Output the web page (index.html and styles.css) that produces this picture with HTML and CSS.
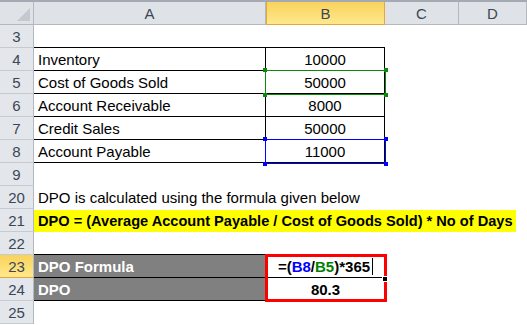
FILE: index.html
```html
<!DOCTYPE html>
<html>
  <head>
    <title>DPO Formula</title>
    <link rel="stylesheet" href="styles.css">
  </head>
  <body>
    <div class="sheet">
      <div class="topbar"></div>

      <!-- column headers -->
      <div class="row colheads">
        <div class="corner"><span class="corner-tri"></span></div>
        <div class="ch">A</div>
        <div class="ch active">B</div>
        <div class="ch">C</div>
        <div class="ch">D</div>
      </div>

      <div class="row">
        <div class="rh">3</div>
        <div class="cell a bottom"></div>
        <div class="cell b bottom"></div>
        <div class="cell"></div>
        <div class="cell"></div>
      </div>
      <div class="row">
        <div class="rh">4</div>
        <div class="cell a tb">Inventory</div>
        <div class="cell b tb tr num">10000</div>
        <div class="cell"></div>
        <div class="cell"></div>
      </div>
      <div class="row">
        <div class="rh">5</div>
        <div class="cell a tb">Cost of Goods Sold</div>
        <div class="cell b tb tr num">50000</div>
        <div class="cell"></div>
        <div class="cell"></div>
      </div>
      <div class="row">
        <div class="rh">6</div>
        <div class="cell a tb">Account Receivable</div>
        <div class="cell b tb tr num">8000</div>
        <div class="cell"></div>
        <div class="cell"></div>
      </div>
      <div class="row">
        <div class="rh">7</div>
        <div class="cell a tb">Credit Sales</div>
        <div class="cell b tb tr num">50000</div>
        <div class="cell"></div>
        <div class="cell"></div>
      </div>
      <div class="row">
        <div class="rh">8</div>
        <div class="cell a tb">Account Payable</div>
        <div class="cell b tb tr num">11000</div>
        <div class="cell"></div>
        <div class="cell"></div>
      </div>
      <div class="row">
        <div class="rh">9</div>
        <div class="cell a"></div>
        <div class="cell b"></div>
        <div class="cell"></div>
        <div class="cell"></div>
      </div>
      <div class="row">
        <div class="rh">20</div>
        <div class="cell wide">DPO is calculated using the formula given below</div>
      </div>
      <div class="row">
        <div class="rh">21</div>
        <div class="cell wide"><span class="highlight">DPO = (Average Account Payable / Cost of Goods Sold) * No of Days</span></div>
      </div>
      <div class="row">
        <div class="rh">22</div>
        <div class="cell a bottom"></div>
        <div class="cell b"></div>
        <div class="cell"></div>
        <div class="cell"></div>
      </div>
      <div class="row">
        <div class="rh active">23</div>
        <div class="cell a tb dark">DPO Formula</div>
        <div class="cell b tb num bold">=(<span class="ref-blue">B8</span>/<span class="ref-green">B5</span>)*365<span class="caret"></span></div>
        <div class="cell"></div>
        <div class="cell"></div>
      </div>
      <div class="row">
        <div class="rh">24</div>
        <div class="cell a tb dark">DPO</div>
        <div class="cell b num bold">80.3</div>
        <div class="cell"></div>
        <div class="cell"></div>
      </div>
      <div class="row">
        <div class="rh">25</div>
        <div class="cell a"></div>
        <div class="cell b"></div>
        <div class="cell"></div>
        <div class="cell"></div>
      </div>

      <!-- selection overlays -->
      <div class="sel sel-green"><i class="h tl"></i><i class="h tr2"></i><i class="h bl"></i><i class="h br"></i></div>
      <div class="sel sel-blue"><i class="h tl"></i><i class="h tr2"></i><i class="h bl"></i><i class="h br"></i></div>
      <div class="sel sel-red"></div>
      <div class="fill-handle"></div>
    </div>
  </body>
</html>
```

FILE: styles.css
```css
body {
  margin: 0px;
  font-family: "Liberation Sans", Arial, sans-serif;
  font-size: 15px;
  color: #000;
  background: #fff;
}

.sheet {
  position: relative;
  width: 527px;
  height: 325px;
  overflow: hidden;
}

.topbar {
  height: 2px;
  background-color: #a3aab3;
}

.row {
  display: grid;
  grid-template-columns: 34px 232px 119px 74px 1fr;
  height: 23px;
}

/* headers */
.colheads {
  background-color: #dfe3e8;
  border-bottom: 1px solid #b3b9c1;
  height: 22px;
  color: #3b4656;
  font-size: 15px;
}

.corner {
  position: relative;
  border-right: 1px solid #b3b9c1;
}

.corner-tri {
  position: absolute;
  right: 3px;
  bottom: 3px;
  width: 0;
  height: 0;
  border-left: 13px solid transparent;
  border-bottom: 13px solid #c4c9cf;
}

.ch {
  display: flex;
  align-items: center;
  justify-content: center;
  border-right: 1px solid #b3b9c1;
}

.ch.active {
  background: linear-gradient(#f9d25c, #ffe98c);
  border: 1px solid #e2a93a;
  border-top: none;
  margin-bottom: -1px;
}

.rh {
  display: flex;
  align-items: center;
  justify-content: center;
  background-color: #e3e6eb;
  border-right: 1px solid #b3b9c1;
  border-bottom: 1px solid #c6cbd2;
  color: #3b4656;
  font-size: 15px;
}

.rh.active {
  background: linear-gradient(#f9d25c, #ffe98c);
  border-bottom: 1px solid #e2a93a;
}

/* cells */
.cell {
  display: flex;
  align-items: center;
  padding-left: 4px;
  white-space: nowrap;
  box-sizing: border-box;
}

.cell.tb,
.cell.bottom {
  border-bottom: 1px solid #000;
}

.cell.a.tb,
.cell.tr {
  border-right: 1px solid #000;
}

.cell.num {
  justify-content: center;
  padding-left: 0;
}

.cell.bold {
  font-weight: bold;
}

.cell.dark {
  background-color: #808080;
  color: #fff;
  font-weight: bold;
}

.cell.wide {
  grid-column: 2 / 6;
}

.highlight {
  display: block;
  background-color: #ffff00;
  font-weight: bold;
  font-size: 14.6px;
  margin-left: -4px;
  padding-left: 4px;
  width: 478px;
  line-height: 23px;
  height: 22px;
  overflow: hidden;
}

.ref-blue {
  color: #0000ff;
}

.ref-green {
  color: #008000;
}

.caret {
  display: inline-block;
  width: 1px;
  height: 17px;
  background-color: #000;
  margin-left: 2px;
}

/* selection overlays */
.sel {
  position: absolute;
  box-sizing: border-box;
}

.sel-green {
  left: 265px;
  top: 70px;
  width: 121px;
  height: 25px;
  border: 1px solid #0a8a0a;
}

.sel-blue {
  left: 265px;
  top: 139px;
  width: 121px;
  height: 25px;
  border: 1px solid #0000ff;
}

.sel-red {
  left: 265px;
  top: 254px;
  width: 122px;
  height: 48px;
  border: 3px solid #ff0000;
}

.h {
  position: absolute;
  width: 4px;
  height: 4px;
}

.sel-green .h {
  background-color: #0a8a0a;
}

.sel-blue .h {
  background-color: #0000ff;
}

.h.tl { left: -3px; top: -3px; }
.h.tr2 { right: -3px; top: -3px; }
.h.bl { left: -3px; bottom: -3px; }
.h.br { right: -3px; bottom: -3px; }

.fill-handle {
  position: absolute;
  left: 382px;
  top: 276px;
  width: 4px;
  height: 4px;
  background-color: #000;
  border: 1px solid #fff;
}
```
